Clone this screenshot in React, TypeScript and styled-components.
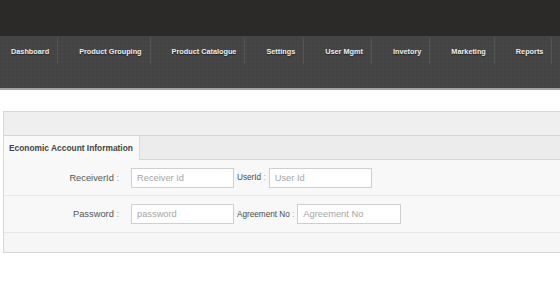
import styled, { createGlobalStyle } from "styled-components";

const GlobalStyle = createGlobalStyle`
  html, body {
    margin: 0;
    padding: 0;
    background: #ffffff;
    overflow: hidden;
    font-family: "Liberation Sans", Arial, sans-serif;
  }
`;

const TopBar = styled.div`
  height: 36px;
  background: #2b2a29;
`;

const NavBar = styled.nav`
  height: 52px;
  display: flex;
  align-items: flex-start;
  background-color: #464646;
  background-image: repeating-linear-gradient(
      0deg,
      rgba(0, 0, 0, 0.035) 0 1px,
      transparent 1px 4px
    ),
    repeating-linear-gradient(
      90deg,
      rgba(0, 0, 0, 0.035) 0 1px,
      transparent 1px 4px
    );
  border-bottom: 2px solid #a4a4a4;
  white-space: nowrap;
`;

const NavItem = styled.a`
  display: flex;
  align-items: center;
  height: 26px;
  margin-top: 2px;
  padding: 0 8px 0 21px;
  border-right: 1px solid #565656;
  color: #eeeeee;
  font-size: 7.3px;
  font-weight: bold;
  text-shadow: 0 1px 1px rgba(0, 0, 0, 0.5);
  text-decoration: none;

  &:first-child {
    padding-left: 11px;
  }
`;

const Panel = styled.section`
  margin: 21px -20px 0 3px;
  border: 1px solid #d6d6d6;
  background: #f8f8f8;
`;

const PanelHeader = styled.div`
  height: 23px;
  background: #efefef;
  border-bottom: 1px solid #d6d6d6;
`;

const TabRow = styled.div`
  display: flex;
  height: 23px;
  background: #ececec;
  border-bottom: 1px solid #d6d6d6;
`;

const Tab = styled.div<{ $active?: boolean }>`
  display: flex;
  align-items: center;
  padding: 0 5px;
  width: 125px;
  background: ${(p) => (p.$active ? "#f9f9f9" : "transparent")};
  border-right: 1px solid #d9d9d9;
  margin-bottom: ${(p) => (p.$active ? "-1px" : "0")};
  color: #444444;
  font-size: 8.4px;
  font-weight: bold;
`;

const FormRow = styled.div<{ $height: number }>`
  display: flex;
  align-items: center;
  height: ${(p) => p.$height}px;
  border-bottom: 1px solid #e8e8e8;
`;

const MainLabel = styled.label`
  width: 115px;
  margin-right: 12px;
  text-align: right;
  color: #555555;
  font-size: 9.3px;
  font-weight: normal;

  span {
    color: #aaaaaa;
  }
`;

const SideLabel = styled.label`
  margin: 0 3px 0 3px;
  color: #4a4a4a;
  font-size: 8.2px;
  font-weight: normal;

  span {
    color: #aaaaaa;
  }
`;

const Input = styled.input<{ $width?: number }>`
  box-sizing: border-box;
  width: ${(p) => p.$width ?? 103}px;
  height: 20px;
  margin: 0;
  padding: 0 5px;
  border: 1px solid #cfcfcf;
  border-radius: 0;
  background: #ffffff;
  font-family: "Liberation Sans", Arial, sans-serif;
  font-size: 9.3px;
  color: #333333;
  outline: none;

  &::placeholder {
    color: #a5a5a5;
  }
`;

const Footer = styled.div`
  height: 19px;
  background: #f6f6f6;
`;

const navItems = [
  "Dashboard",
  "Product Grouping",
  "Product Catalogue",
  "Settings",
  "User Mgmt",
  "Invetory",
  "Marketing",
  "Reports",
];

export default function App() {
  return (
    <>
      <GlobalStyle />
      <TopBar />
      <NavBar>
        {navItems.map((item) => (
          <NavItem key={item} href="#">
            {item}
          </NavItem>
        ))}
      </NavBar>
      <Panel>
        <PanelHeader />
        <TabRow>
          <Tab $active>Economic Account Information</Tab>
        </TabRow>
        <FormRow $height={35}>
          <MainLabel>
            ReceiverId <span>:</span>
          </MainLabel>
          <Input placeholder="Receiver Id" />
          <SideLabel>
            UserId <span>:</span>
          </SideLabel>
          <Input placeholder="User Id" />
        </FormRow>
        <FormRow $height={36}>
          <MainLabel>
            Password <span>:</span>
          </MainLabel>
          <Input placeholder="password" />
          <SideLabel>
            Agreement No <span>:</span>
          </SideLabel>
          <Input placeholder="Agreement No" $width={104} />
        </FormRow>
        <Footer />
      </Panel>
    </>
  );
}
